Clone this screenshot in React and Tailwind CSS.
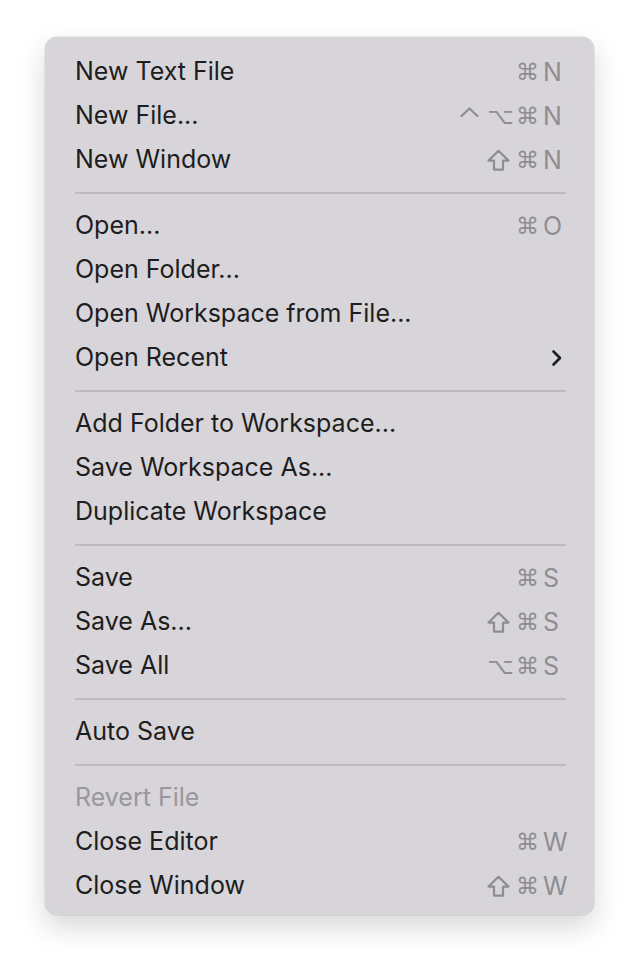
import React from "react";

const groups = [
  [
    { label: "New Text File", keys: ["⌘", "N"] },
    { label: "New File...", keys: ["⌃", "⌥", "⌘", "N"] },
    { label: "New Window", keys: ["⇧", "⌘", "N"] },
  ],
  [
    { label: "Open...", keys: ["⌘", "O"] },
    { label: "Open Folder..." },
    { label: "Open Workspace from File..." },
    { label: "Open Recent", submenu: true },
  ],
  [
    { label: "Add Folder to Workspace..." },
    { label: "Save Workspace As..." },
    { label: "Duplicate Workspace" },
  ],
  [
    { label: "Save", keys: ["⌘", "S"] },
    { label: "Save As...", keys: ["⇧", "⌘", "S"] },
    { label: "Save All", keys: ["⌥", "⌘", "S"] },
  ],
  [{ label: "Auto Save" }],
  [
    { label: "Revert File", disabled: true },
    { label: "Close Editor", keys: ["⌘", "W"] },
    { label: "Close Window", keys: ["⇧", "⌘", "W"] },
  ],
];

const KEY = "#8f8d92";

function Mod({ m }) {
  if (m === "⇧") {
    return (
      <span className="w-[27px] flex justify-start">
        <svg width="23" height="23" viewBox="0 0 23 23">
          <path
            d="M11.5 1.8 L21.5 11.6 L16 11.6 L16 20.6 L7 20.6 L7 11.6 L1.5 11.6 Z"
            fill="none"
            stroke={KEY}
            strokeWidth="2.2"
            strokeLinejoin="round"
          />
        </svg>
      </span>
    );
  }
  if (m === "⌃") {
    return (
      <span className="w-[27px] flex justify-start">
        <svg width="20" height="22" viewBox="0 0 20 22">
          <path d="M1.5 11 L9.5 3.5 L17.5 11" fill="none" stroke={KEY} strokeWidth="2.2" strokeLinecap="round" strokeLinejoin="round" />
        </svg>
      </span>
    );
  }
  return (
    <span className="w-[27px] text-center text-[23px] leading-none" style={{ fontFamily: '"DejaVu Sans", sans-serif' }}>
      {m}
    </span>
  );
}

function Keys({ keys }) {
  const letter = keys[keys.length - 1];
  const mods = keys.slice(0, -1);
  return (
    <div className="flex items-center text-[#8f8d92]">
      {mods.map((m, i) => (
        <Mod key={i} m={m} />
      ))}
      <span className="w-[25px] pl-[2px] text-left text-[25px] leading-none">{letter}</span>
    </div>
  );
}

function Row({ item }) {
  return (
    <div className="h-[44px] flex items-center justify-between">
      <span className={item.disabled ? "text-[#99979c]" : "text-[#1e1d20]"}>{item.label}</span>
      {item.keys && <Keys keys={item.keys} />}
      {item.submenu && (
        <svg width="14" height="20" viewBox="0 0 14 20" className="mr-[2px]">
          <path d="M3.5 3.5 L10 10 L3.5 16.5" fill="none" stroke="#1e1d20" strokeWidth="2.6" strokeLinecap="round" strokeLinejoin="round" />
        </svg>
      )}
    </div>
  );
}

export default function App() {
  return (
    <div className="w-[640px] h-[970px] bg-white pt-[37px] pl-[45px]" style={{ fontFamily: 'Inter, "Noto Sans", sans-serif' }}>
      <div className="w-[549px] rounded-[12px] bg-[#d7d5d9] pl-[30px] pr-[28px] pt-[13px] pb-[7px] text-[25px] shadow-[0_12px_28px_rgba(0,0,0,0.16),0_0_0_0.5px_rgba(0,0,0,0.12)]">
        {groups.map((g, gi) => (
          <div key={gi}>
            {gi > 0 && (
              <div className="h-[22px] flex items-center">
                <div className="h-[2px] w-full bg-[#bdbbbf]" />
              </div>
            )}
            {g.map((item, ii) => (
              <Row key={ii} item={item} />
            ))}
          </div>
        ))}
      </div>
    </div>
  );
}
